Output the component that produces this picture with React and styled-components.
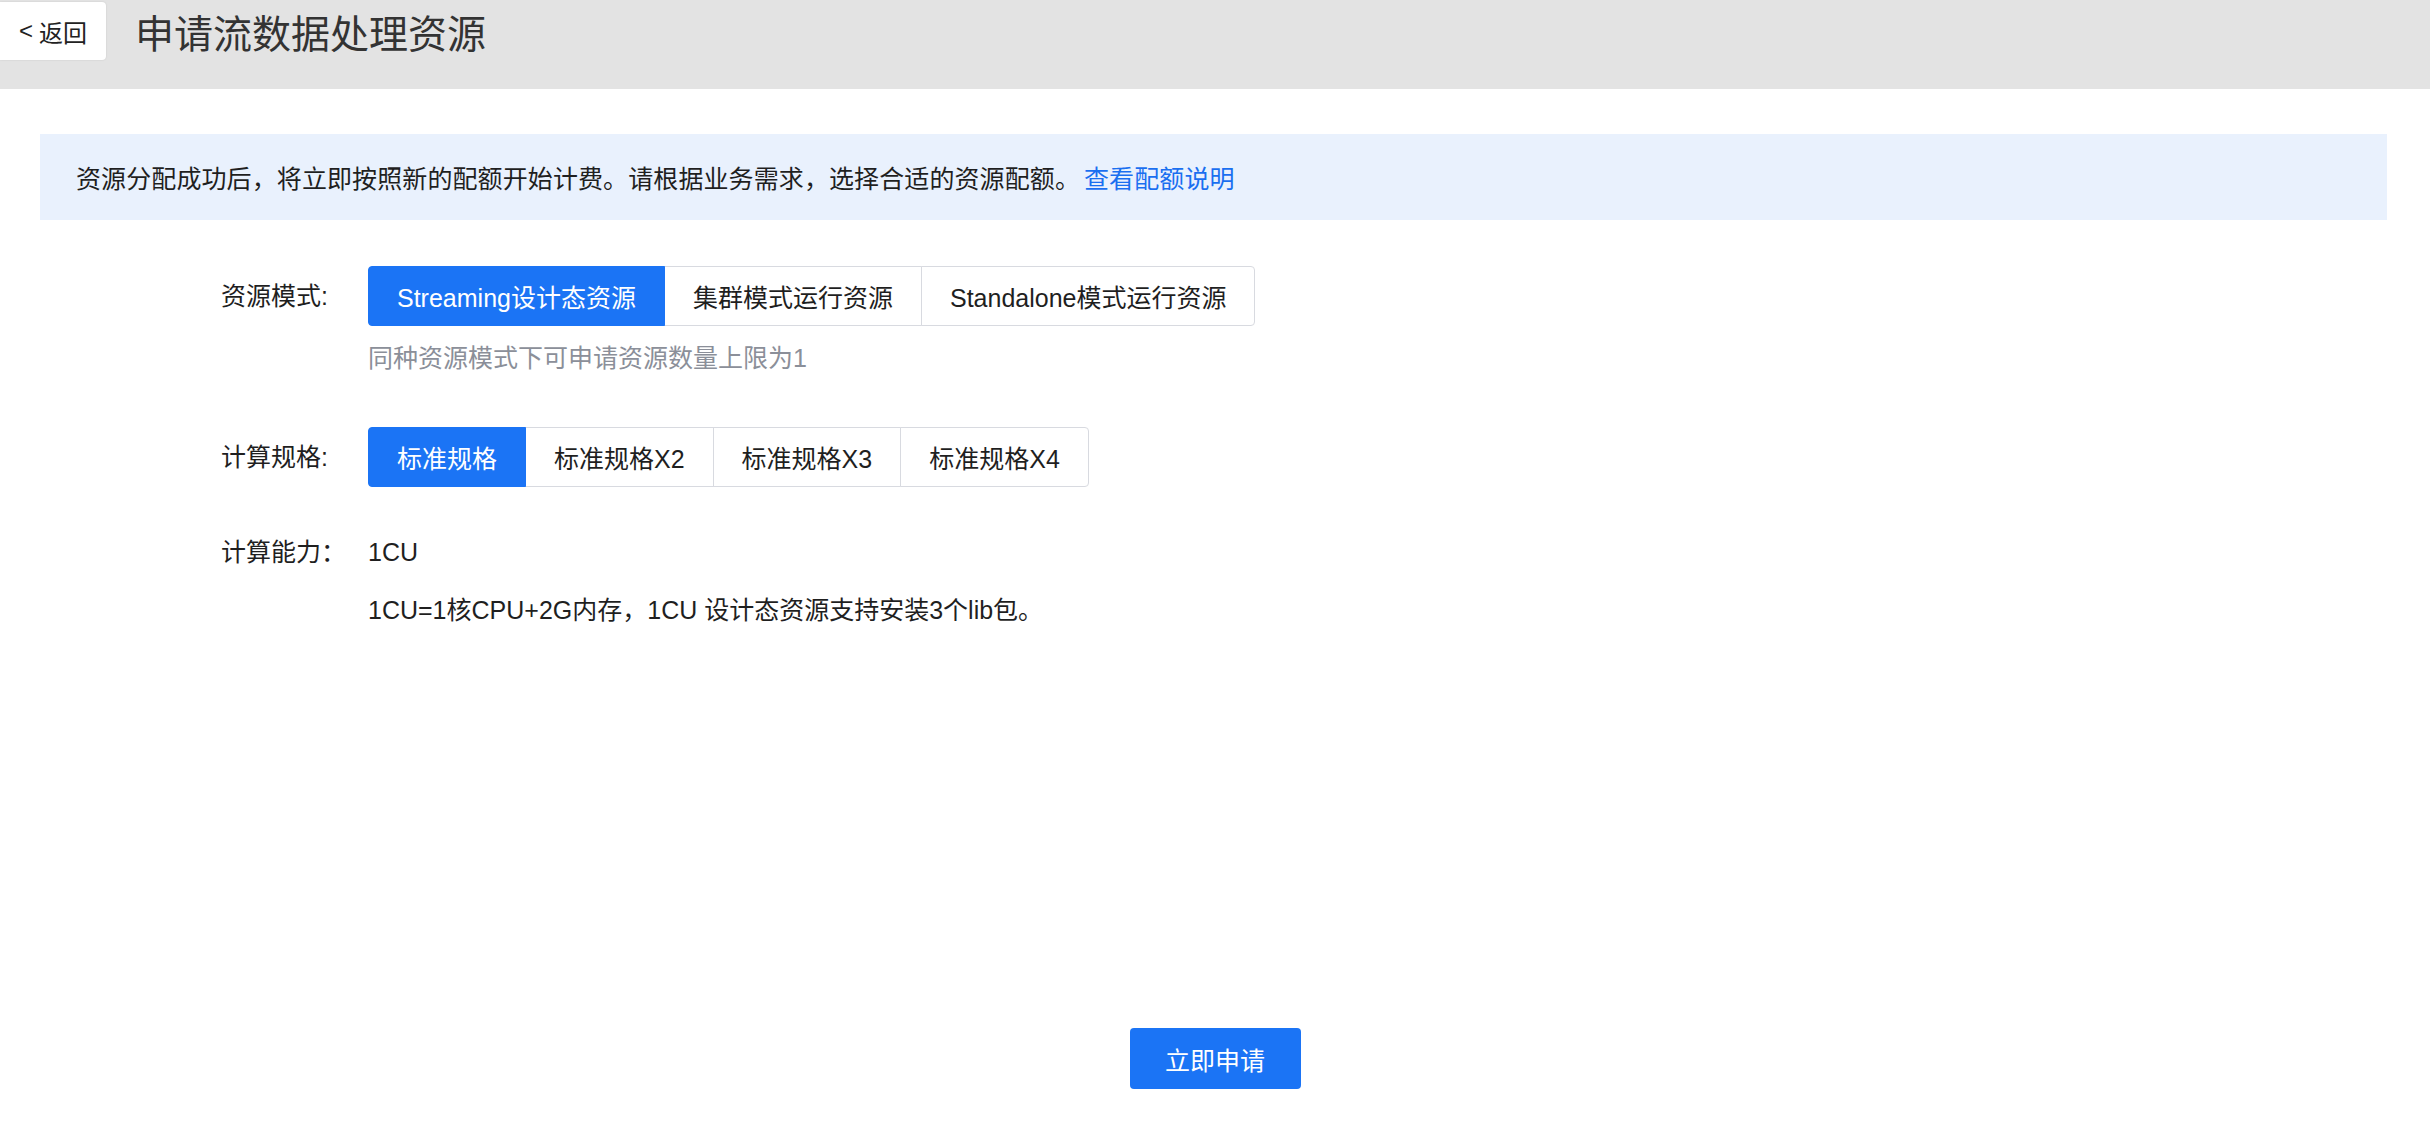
import React, { useState } from "react";
import styled, { createGlobalStyle } from "styled-components";

const GlobalStyle = createGlobalStyle`
    body {
        margin: 0;
        background: #fff;
        font-family: "Liberation Sans", "Noto Sans CJK SC", sans-serif;
    }
`;

const Page = styled.div`
    min-height: 100vh;
    display: flex;
    flex-direction: column;
    color: #1f1f1f;
    font-size: 25px;
`;

const Header = styled.div`
    height: 89px;
    background-color: #e3e3e3;
    display: flex;
    align-items: flex-start;
    gap: 29px;
`;

const BackButton = styled.button`
    margin-top: 2px;
    width: 106px;
    height: 58px;
    background: #fff;
    border: none;
    border-radius: 0 4px 4px 0;
    box-shadow: 0 0 2px rgba(0, 0, 0, 0.12);
    font-family: inherit;
    font-size: 24px;
    color: #222;
    display: flex;
    align-items: center;
    justify-content: center;
    gap: 6px;
    padding: 0;
    cursor: pointer;
`;

const Title = styled.h1`
    margin: 0;
    font-size: 39px;
    line-height: 70px;
    font-weight: 400;
    color: #333;
`;

const Notice = styled.div`
    margin: 45px 43px 0 40px;
    height: 86px;
    background-color: #e9f1fd;
    padding-left: 36px;
    display: flex;
    align-items: center;
    letter-spacing: 0.1px;
`;

const Link = styled.a`
    color: #1a6ff0;
    text-decoration: none;
    margin-left: 4px;
    cursor: pointer;
`;

const Form = styled.div`
    flex: 1;
    padding: 46px 0 0 221px;
    display: flex;
    flex-direction: column;
`;

const Row = styled.div`
    display: flex;
    align-items: flex-start;
    margin-top: ${(p) => p.$gap || 0}px;
`;

const Label = styled.div`
    width: 147px;
    flex-shrink: 0;
    line-height: ${(p) => (p.$tall ? 60 : 36)}px;
`;

const Field = styled.div`
    display: flex;
    flex-direction: column;
    align-items: flex-start;
`;

const Segmented = styled.div`
    display: flex;
`;

const Segment = styled.button`
    position: relative;
    z-index: ${(p) => (p.$active ? 1 : 0)};
    height: 60px;
    padding: 0 28px;
    margin-left: -1px;
    border: 1px solid ${(p) => (p.$active ? "#1b74f5" : "#d8dae0")};
    background-color: ${(p) => (p.$active ? "#1b74f5" : "#fff")};
    color: ${(p) => (p.$active ? "#fff" : "#1f1f1f")};
    font-family: inherit;
    font-size: 25px;
    white-space: nowrap;
    cursor: pointer;

    &:first-child {
        margin-left: 0;
        border-radius: 4px 0 0 4px;
    }
    &:last-child {
        border-radius: 0 4px 4px 0;
    }
`;

const Hint = styled.div`
    margin-top: 16px;
    line-height: 32px;
    color: #8b8f99;
`;

const Value = styled.div`
    line-height: 36px;
    margin-top: ${(p) => p.$gap || 0}px;
`;

const Footer = styled.div`
    display: flex;
    justify-content: center;
    padding-bottom: 37px;
`;

const Submit = styled.button`
    width: 171px;
    height: 61px;
    border: none;
    border-radius: 4px;
    background-color: #1b74f5;
    color: #fff;
    font-family: inherit;
    font-size: 25px;
    cursor: pointer;
`;

const modes = ["Streaming设计态资源", "集群模式运行资源", "Standalone模式运行资源"];
const specs = ["标准规格", "标准规格X2", "标准规格X3", "标准规格X4"];

function App() {
    const [mode, setMode] = useState(0);
    const [spec, setSpec] = useState(0);
    const cu = spec + 1;

    return (
        <Page>
            <GlobalStyle />
            <Header>
                <BackButton>
                    <span>&lt;</span>
                    <span>返回</span>
                </BackButton>
                <Title>申请流数据处理资源</Title>
            </Header>

            <Notice>
                资源分配成功后，将立即按照新的配额开始计费。请根据业务需求，选择合适的资源配额。
                <Link>查看配额说明</Link>
            </Notice>

            <Form>
                <Row>
                    <Label $tall>资源模式:</Label>
                    <Field>
                        <Segmented>
                            {modes.map((m, i) => (
                                <Segment key={m} $active={i === mode} onClick={() => setMode(i)}>
                                    {m}
                                </Segment>
                            ))}
                        </Segmented>
                        <Hint>同种资源模式下可申请资源数量上限为1</Hint>
                    </Field>
                </Row>

                <Row $gap={53}>
                    <Label $tall>计算规格:</Label>
                    <Segmented>
                        {specs.map((s, i) => (
                            <Segment key={s} $active={i === spec} onClick={() => setSpec(i)}>
                                {s}
                            </Segment>
                        ))}
                    </Segmented>
                </Row>

                <Row $gap={47}>
                    <Label>计算能力：</Label>
                    <Field>
                        <Value>{cu}CU</Value>
                        <Value $gap={22}>1CU=1核CPU+2G内存，1CU 设计态资源支持安装3个lib包。</Value>
                    </Field>
                </Row>
            </Form>

            <Footer>
                <Submit>立即申请</Submit>
            </Footer>
        </Page>
    );
}

export default App;
